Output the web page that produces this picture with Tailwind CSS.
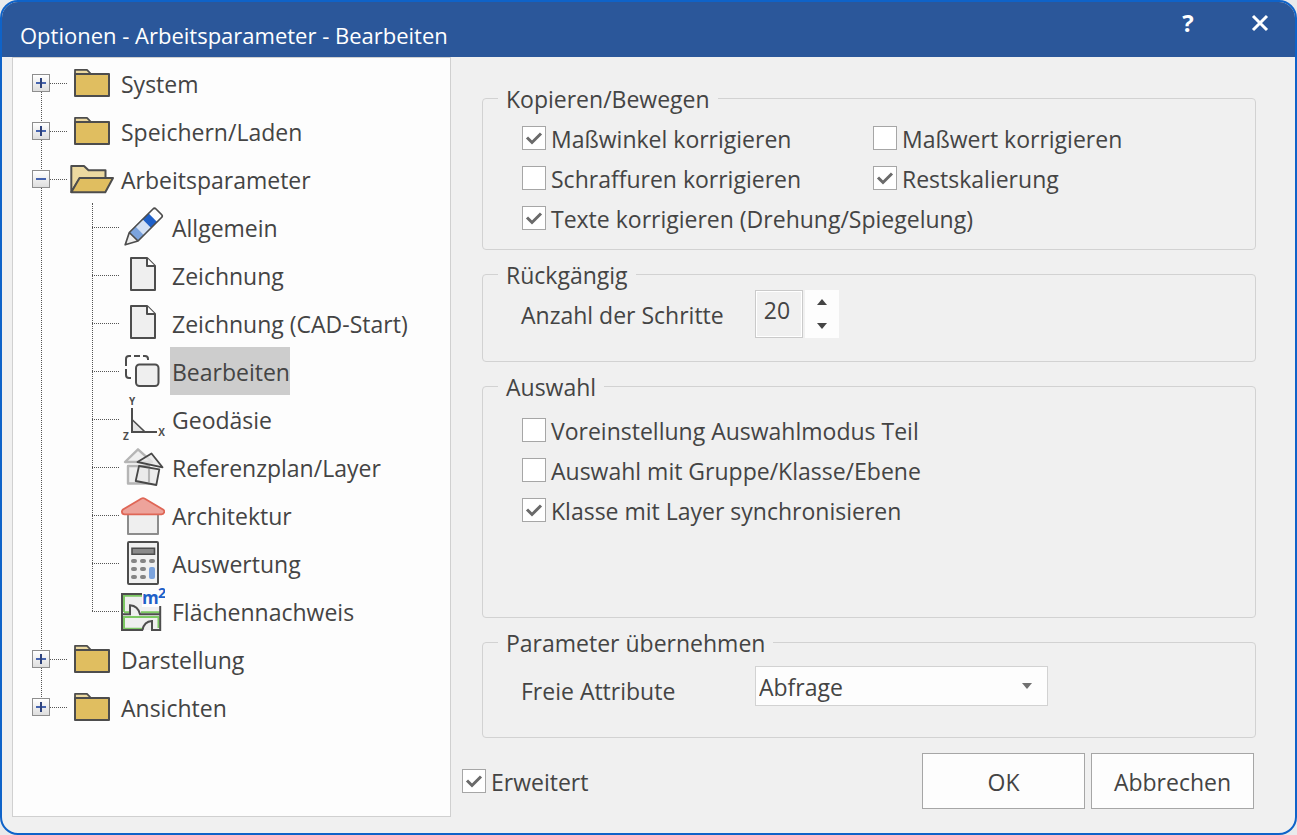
<!DOCTYPE html>
<html lang="de">
<head>
<meta charset="utf-8">
<meta name="viewport" content="width=device-width, initial-scale=1">
<title>Optionen - Arbeitsparameter - Bearbeiten</title>
<script src="https://cdn.jsdelivr.net/npm/@tailwindcss/browser@4"></script>
</head>
<body class="bg-[#e9eaec] font-['Open_Sans','Noto_Sans',sans-serif] text-[23px] leading-9 text-[#444444]">
<svg class="hidden" aria-hidden="true">
  <symbol id="plus" viewBox="1 1 16 16"><path d="M4 9h10" stroke="#4664ae" stroke-width="2"/><path d="M9 4v10" stroke="#2f437c" stroke-width="2"/></symbol>
  <symbol id="minus" viewBox="1 1 16 16"><path d="M4 9h10" stroke="#4664ae" stroke-width="2"/></symbol>
  <symbol id="check" viewBox="0 0 24 24"><path d="M5 11.500l5 5L19 7.500" fill="none" stroke="#6a6a6a" stroke-width="3"/></symbol>
  <symbol id="folder" viewBox="0 0 44 48">
    <path d="M5 15v-4.2h12l4 4.2" fill="#ecd9a0" stroke="#4d4d4d" stroke-width="1.8" stroke-linejoin="round"/>
    <path d="M5 15h34v22H5z" fill="#e0be60" stroke="#4d4d4d" stroke-width="2" stroke-linejoin="round"/>
  </symbol>
  <symbol id="folder-open" viewBox="0 0 44 48">
    <g stroke="#4d4d4d" stroke-width="2" stroke-linejoin="round">
      <path d="M1.3 37V11H14l4.500 4.300h17V23H10z" fill="#ecd9a0"/>
      <path d="M9.500 23H43l-7.700 14.300H1.300z" fill="#e0be60"/>
    </g>
  </symbol>
  <symbol id="pencil" viewBox="0 0 44 48">
    <path d="M8.300 29.500L32 6q1.500-1.500 3 0l5.500 5.500q1.500 1.500 0 3L17 38z" fill="#fdfdfd"/>
    <path d="M8.300 29.500L14.500 23.300l8.600 8.600L17 38z" fill="#7ba3dd"/>
    <path d="M14.500 23.300l7-7 8.600 8.600-7 7z" fill="#d2e0f5"/>
    <path d="M21.500 16.300l6-6 8.600 8.600-6 6z" fill="#1f60c8"/>
    <path d="M8.300 29.500L17 38 4.200 41.800z" fill="#eee"/>
    <path d="M8.300 29.500L32 6q1.500-1.500 3 0l5.500 5.500q1.500 1.500 0 3L17 38 4.200 41.800zL17 38" fill="none" stroke="#4d4d4d" stroke-width="1.700" stroke-linejoin="round"/>
  </symbol>
  <symbol id="page" viewBox="0 0 44 48">
    <g fill="#efefef" stroke="#4d4d4d" stroke-width="2" stroke-linejoin="round"><path d="M10 7h16l8 8v24H10z"/><path d="M26 7v8h8" fill="#fdfdfd"/></g>
  </symbol>
  <symbol id="copy" viewBox="0 0 44 48">
    <path d="M5 19v-7q0-3 3-3h2M5 22v6q0 3 3 3h2M13 9h6M22 9h2q3 0 3 3v1" fill="none" stroke="#4d4d4d" stroke-width="2"/>
    <rect x="15" y="17.500" width="22.500" height="21.500" rx="3.500" fill="#efefef" stroke="#4d4d4d" stroke-width="2"/>
  </symbol>
  <symbol id="axes" viewBox="0 0 44 48">
    <path d="M11 24.500l13 12.500H11z" fill="#e4e4e4" stroke="#4d4d4d" stroke-width="1.600"/>
    <path d="M11 13v24h25" fill="none" stroke="#4d4d4d" stroke-width="2"/>
    <g fill="#4d4d4d" font-size="10" font-weight="700" text-anchor="middle"><text x="11" y="10">Y</text><text x="5" y="45">Z</text><text x="40.500" y="41">X</text></g>
  </symbol>
  <symbol id="reference" viewBox="0 0 44 48">
    <g fill="#efefef" stroke="#b5b5b5" stroke-width="2.400" stroke-linejoin="round"><path d="M17 6.300L4 19h27z"/><path d="M7 23h21v17.500H7z"/></g>
    <g fill="#e8e8e8" fill-opacity=".8" stroke="#484848" stroke-width="1.800" stroke-linejoin="round"><path d="M30.500 10.500L16.500 19l25 5.300z"/><path d="M18 23l20.300 3.300L35.300 42l-20.600-4z"/></g>
    <path d="M28 26v13" stroke="#b5b5b5" stroke-width="2"/>
  </symbol>
  <symbol id="house" viewBox="0 0 44 48">
    <path d="M7 23h30v20H7z" fill="#efefef" stroke="#8c8c8c" stroke-width="2" stroke-linejoin="round"/>
    <path d="M20.500 7.500q1.500-.7 3 0L42 18.500q1.500 1 1.300 2.300-.3 2.500-2.800 2.500h-37Q1.200 23.300.9 20.800.8 19.500 2 18.500z" fill="#eda39b" stroke="#df6656" stroke-width="1.800"/>
  </symbol>
  <symbol id="calculator" viewBox="0 0 44 48">
    <rect x="7" y="3" width="30" height="42" rx="1" fill="#f1f1f1" stroke="#4d4d4d" stroke-width="2"/>
    <path d="M11 9.200h22.500v6H11z" fill="#8a8a8a" stroke="#4d4d4d" stroke-width="1.600"/>
    <g fill="#858585"><rect x="10" y="20" width="6" height="4" rx="2"/><rect x="19" y="20" width="6" height="4" rx="2"/><rect x="28" y="20" width="6" height="4" rx="2"/><rect x="10" y="28" width="6" height="4" rx="2"/><rect x="19" y="28" width="6" height="4" rx="2"/><rect x="10" y="36" width="6" height="4" rx="2"/><rect x="19" y="36" width="6" height="4" rx="2"/></g>
    <rect x="28" y="28" width="6" height="12" rx="2" fill="#7ba3dd"/>
  </symbol>
  <symbol id="area" viewBox="0 0 44 48">
    <path d="M1 7h20v13h18v23H1z" fill="#efefef"/>
    <path d="M3 25V8.700h18M39 25.300H20M3 25.300h5M38 30H3v11.700h18M37.500 41V30" fill="none" stroke="#7cc863" stroke-width="2"/>
    <path d="M21 7H1v36h21M39.200 19v24H31v-9q-8 .5-9.500 9M1 27.300h8v-9q8 .5 10 9h20" fill="none" stroke="#4d4d4d" stroke-width="2"/>
    <g fill="#1f60c8" font-weight="700"><text x="21" y="17" font-size="17">m</text><text x="37" y="11" font-size="14">2</text></g>
  </symbol>
</svg>

<main class="flex min-h-screen flex-col overflow-hidden rounded-[18px] border-2 border-[#0f63c9] bg-[#f0f0f0]">
  <header class="flex h-[55px] shrink-0 items-start justify-between bg-[#2b579a] pr-[25px] pl-[18px] text-white">
    <h1 class="pt-[15px] text-[22px] leading-9">Optionen - Arbeitsparameter - Bearbeiten</h1>
    <div class="flex gap-[52px] pt-[11px]">
      <button type="button" aria-label="Hilfe" class="flex h-5 w-5 items-center justify-center text-2xl font-bold">?</button>
      <button type="button" aria-label="Schließen" class="flex h-5 w-5 items-center justify-center"><svg class="h-5 w-5" viewBox="0 0 20 20" aria-hidden="true"><path d="M3 3l14 14M17 3L3 17" stroke="#fff" stroke-width="3"/></svg></button>
    </div>
  </header>

  <div class="flex flex-1">
    <nav aria-label="Kategorien" class="mb-4 ml-2.5 w-[439px] shrink-0 border border-[#d0d0d0] bg-[#fdfdfd] pt-px">
      <ul class="relative before:absolute before:top-6 before:bottom-6 before:left-7 before:border-l before:border-dotted before:border-[#555555]">
        <li class="relative flex h-12 items-center pl-[19px]">
          <button type="button" aria-label="System öffnen" class="h-[18px] w-[18px] border border-[#8e8e8e] bg-linear-to-b from-white to-[#dedede]"><svg class="h-4 w-4"><use href="#plus"/></svg></button>
          <span class="mr-[3px] w-[17px] border-t border-dotted border-[#555555]"></span>
          <svg class="h-12 w-11"><use href="#folder"/></svg>
          <a href="#" class="ml-[5px] flex h-12 items-center px-0.5 pt-0.5">System</a>
        </li>
        <li class="relative flex h-12 items-center pl-[19px]">
          <button type="button" aria-label="Speichern/Laden öffnen" class="h-[18px] w-[18px] border border-[#8e8e8e] bg-linear-to-b from-white to-[#dedede]"><svg class="h-4 w-4"><use href="#plus"/></svg></button>
          <span class="mr-[3px] w-[17px] border-t border-dotted border-[#555555]"></span>
          <svg class="h-12 w-11"><use href="#folder"/></svg>
          <a href="#" class="ml-[5px] flex h-12 items-center px-0.5 pt-0.5">Speichern/Laden</a>
        </li>
        <li>
          <div class="relative flex h-12 items-center pl-[19px]">
            <button type="button" aria-label="Arbeitsparameter schließen" class="h-[18px] w-[18px] border border-[#8e8e8e] bg-linear-to-b from-white to-[#dedede]"><svg class="h-4 w-4"><use href="#minus"/></svg></button>
            <span class="mr-[3px] w-[17px] border-t border-dotted border-[#555555]"></span>
            <svg class="h-12 w-11"><use href="#folder-open"/></svg>
            <a href="#" class="ml-[5px] flex h-12 items-center px-0.5 pt-0.5">Arbeitsparameter</a>
          </div>
          <ul class="relative pl-[79px] before:absolute before:top-0 before:bottom-6 before:border-l before:border-dotted before:border-[#555555]">
            <li class="flex h-12 items-center"><span class="mr-0.5 w-[27px] border-t border-dotted border-[#555555]"></span><svg class="h-12 w-11"><use href="#pencil"/></svg><a href="#" class="ml-[5px] flex h-12 items-center px-0.5 pt-0.5">Allgemein</a></li>
            <li class="flex h-12 items-center"><span class="mr-0.5 w-[27px] border-t border-dotted border-[#555555]"></span><svg class="h-12 w-11"><use href="#page"/></svg><a href="#" class="ml-[5px] flex h-12 items-center px-0.5 pt-0.5">Zeichnung</a></li>
            <li class="flex h-12 items-center"><span class="mr-0.5 w-[27px] border-t border-dotted border-[#555555]"></span><svg class="h-12 w-11"><use href="#page"/></svg><a href="#" class="ml-[5px] flex h-12 items-center px-0.5 pt-0.5">Zeichnung (CAD-Start)</a></li>
            <li class="flex h-12 items-center"><span class="mr-0.5 w-[27px] border-t border-dotted border-[#555555]"></span><svg class="h-12 w-11"><use href="#copy"/></svg><a href="#" aria-current="page" class="ml-[5px] flex h-12 items-center bg-[#cdcdcd] pt-0.5 pl-0.5">Bearbeiten</a></li>
            <li class="flex h-12 items-center"><span class="mr-0.5 w-[27px] border-t border-dotted border-[#555555]"></span><svg class="h-12 w-11"><use href="#axes"/></svg><a href="#" class="ml-[5px] flex h-12 items-center px-0.5 pt-0.5">Geodäsie</a></li>
            <li class="flex h-12 items-center"><span class="mr-0.5 w-[27px] border-t border-dotted border-[#555555]"></span><svg class="h-12 w-11"><use href="#reference"/></svg><a href="#" class="ml-[5px] flex h-12 items-center px-0.5 pt-0.5">Referenzplan/Layer</a></li>
            <li class="flex h-12 items-center"><span class="mr-0.5 w-[27px] border-t border-dotted border-[#555555]"></span><svg class="h-12 w-11"><use href="#house"/></svg><a href="#" class="ml-[5px] flex h-12 items-center px-0.5 pt-0.5">Architektur</a></li>
            <li class="flex h-12 items-center"><span class="mr-0.5 w-[27px] border-t border-dotted border-[#555555]"></span><svg class="h-12 w-11"><use href="#calculator"/></svg><a href="#" class="ml-[5px] flex h-12 items-center px-0.5 pt-0.5">Auswertung</a></li>
            <li class="flex h-12 items-center"><span class="mr-0.5 w-[27px] border-t border-dotted border-[#555555]"></span><svg class="h-12 w-11 overflow-visible"><use href="#area"/></svg><a href="#" class="ml-[5px] flex h-12 items-center px-0.5 pt-0.5">Flächennachweis</a></li>
          </ul>
        </li>
        <li class="relative flex h-12 items-center pl-[19px]">
          <button type="button" aria-label="Darstellung öffnen" class="h-[18px] w-[18px] border border-[#8e8e8e] bg-linear-to-b from-white to-[#dedede]"><svg class="h-4 w-4"><use href="#plus"/></svg></button>
          <span class="mr-[3px] w-[17px] border-t border-dotted border-[#555555]"></span>
          <svg class="h-12 w-11"><use href="#folder"/></svg>
          <a href="#" class="ml-[5px] flex h-12 items-center px-0.5 pt-0.5">Darstellung</a>
        </li>
        <li class="relative flex h-12 items-center pl-[19px]">
          <button type="button" aria-label="Ansichten öffnen" class="h-[18px] w-[18px] border border-[#8e8e8e] bg-linear-to-b from-white to-[#dedede]"><svg class="h-4 w-4"><use href="#plus"/></svg></button>
          <span class="mr-[3px] w-[17px] border-t border-dotted border-[#555555]"></span>
          <svg class="h-12 w-11"><use href="#folder"/></svg>
          <a href="#" class="ml-[5px] flex h-12 items-center px-0.5 pt-0.5">Ansichten</a>
        </li>
      </ul>
    </nav>

    <form class="flex flex-1 flex-col pt-[25px] pb-6">
      <div class="mr-[39px] ml-[31px] flex flex-1 flex-col gap-2">
        <fieldset class="rounded border border-[#d2d2d2] pb-[11px] pl-[39px]">
          <legend class="-ml-6 h-8 px-2 leading-[34px]">Kopieren/Bewegen</legend>
          <div class="grid grid-cols-[351px_1fr] pt-1">
            <label class="flex h-10 items-center gap-[5px]"><span class="relative h-6 w-6"><input type="checkbox" checked class="peer block h-6 w-6 appearance-none border border-[#a6a6a6] bg-white"><svg class="pointer-events-none absolute inset-0 hidden h-6 w-6 peer-checked:block"><use href="#check"/></svg></span><span class="pt-0.5">Maßwinkel korrigieren</span></label>
            <label class="flex h-10 items-center gap-[5px]"><span class="relative h-6 w-6"><input type="checkbox" class="peer block h-6 w-6 appearance-none border border-[#a6a6a6] bg-white"><svg class="pointer-events-none absolute inset-0 hidden h-6 w-6 peer-checked:block"><use href="#check"/></svg></span><span class="pt-0.5">Maßwert korrigieren</span></label>
            <label class="flex h-10 items-center gap-[5px]"><span class="relative h-6 w-6"><input type="checkbox" class="peer block h-6 w-6 appearance-none border border-[#a6a6a6] bg-white"><svg class="pointer-events-none absolute inset-0 hidden h-6 w-6 peer-checked:block"><use href="#check"/></svg></span><span class="pt-0.5">Schraffuren korrigieren</span></label>
            <label class="flex h-10 items-center gap-[5px]"><span class="relative h-6 w-6"><input type="checkbox" checked class="peer block h-6 w-6 appearance-none border border-[#a6a6a6] bg-white"><svg class="pointer-events-none absolute inset-0 hidden h-6 w-6 peer-checked:block"><use href="#check"/></svg></span><span class="pt-0.5">Restskalierung</span></label>
            <label class="col-span-2 flex h-10 items-center gap-[5px]"><span class="relative h-6 w-6"><input type="checkbox" checked class="peer block h-6 w-6 appearance-none border border-[#a6a6a6] bg-white"><svg class="pointer-events-none absolute inset-0 hidden h-6 w-6 peer-checked:block"><use href="#check"/></svg></span><span class="pt-0.5">Texte korrigieren (Drehung/Spiegelung)</span></label>
          </div>
        </fieldset>

        <fieldset class="rounded border border-[#d2d2d2] pb-[23px] pl-[38px]">
          <legend class="-ml-[23px] h-8 px-2 leading-[34px]">Rückgängig</legend>
          <div class="flex h-12 items-center">
            <label for="steps" class="w-[234px] pt-0.5">Anzahl der Schritte</label>
            <input id="steps" type="text" inputmode="numeric" value="20" class="h-12 w-12 border border-[#cacaca] bg-[#f0f0f0] pr-1 pb-2 text-center inset-ring-1 inset-ring-white">
            <div class="ml-0.5 flex h-12 w-[34px] flex-col bg-[#fdfdfd]">
              <button type="button" aria-label="Mehr Schritte" class="flex flex-1 items-center justify-center"><svg class="h-1.5 w-2.5" viewBox="0 0 10 6"><path d="M0 6l5-6 5 6z" fill="#444"/></svg></button>
              <button type="button" aria-label="Weniger Schritte" class="flex flex-1 items-center justify-center"><svg class="h-1.5 w-2.5" viewBox="0 0 10 6"><path d="M0 0l5 6 5-6z" fill="#444"/></svg></button>
            </div>
          </div>
        </fieldset>

        <fieldset class="flex-1 rounded border border-[#d2d2d2] pl-[39px]">
          <legend class="-ml-6 h-8 px-2 leading-[34px]">Auswahl</legend>
          <div class="pt-2">
            <label class="flex h-10 items-center gap-[5px]"><span class="relative h-6 w-6"><input type="checkbox" class="peer block h-6 w-6 appearance-none border border-[#a6a6a6] bg-white"><svg class="pointer-events-none absolute inset-0 hidden h-6 w-6 peer-checked:block"><use href="#check"/></svg></span><span class="pt-0.5">Voreinstellung Auswahlmodus Teil</span></label>
            <label class="flex h-10 items-center gap-[5px]"><span class="relative h-6 w-6"><input type="checkbox" class="peer block h-6 w-6 appearance-none border border-[#a6a6a6] bg-white"><svg class="pointer-events-none absolute inset-0 hidden h-6 w-6 peer-checked:block"><use href="#check"/></svg></span><span class="pt-0.5">Auswahl mit Gruppe/Klasse/Ebene</span></label>
            <label class="flex h-10 items-center gap-[5px]"><span class="relative h-6 w-6"><input type="checkbox" checked class="peer block h-6 w-6 appearance-none border border-[#a6a6a6] bg-white"><svg class="pointer-events-none absolute inset-0 hidden h-6 w-6 peer-checked:block"><use href="#check"/></svg></span><span class="pt-0.5">Klasse mit Layer synchronisieren</span></label>
          </div>
        </fieldset>

        <fieldset class="rounded border border-[#d2d2d2] pb-[31px] pl-[38px]">
          <legend class="-ml-[23px] h-8 px-2 leading-[34px]">Parameter übernehmen</legend>
          <div class="flex items-center pt-2">
            <label for="attributes" class="h-10 w-[234px] pt-[7px]">Freie Attribute</label>
            <div class="relative w-[293px]">
              <select id="attributes" class="block h-10 w-full appearance-none border border-[#d2d2d2] bg-[#fdfdfd] pt-0.5 pl-[3px]"><option>Abfrage</option></select>
              <svg class="pointer-events-none absolute top-[17px] right-4 h-1.5 w-2.5" viewBox="0 0 10 6" aria-hidden="true"><path d="M0 0l5 6 5-6z" fill="#707070"/></svg>
            </div>
          </div>
        </fieldset>
      </div>

      <footer class="mt-[15px] mr-[41px] ml-[11px] flex items-center justify-between">
        <label class="flex h-10 items-center gap-[5px]"><span class="relative h-6 w-6"><input type="checkbox" checked class="peer block h-6 w-6 appearance-none border border-[#a6a6a6] bg-white"><svg class="pointer-events-none absolute inset-0 hidden h-6 w-6 peer-checked:block"><use href="#check"/></svg></span><span class="pt-0.5">Erweitert</span></label>
        <div class="flex gap-1.5">
          <button type="submit" class="h-14 w-[163px] border border-[#a6a6a6] bg-[#fdfdfd] pt-0.5">OK</button>
          <button type="button" class="h-14 w-[163px] border border-[#a6a6a6] bg-[#fdfdfd] pt-0.5">Abbrechen</button>
        </div>
      </footer>
    </form>
  </div>
</main>
</body>
</html>
